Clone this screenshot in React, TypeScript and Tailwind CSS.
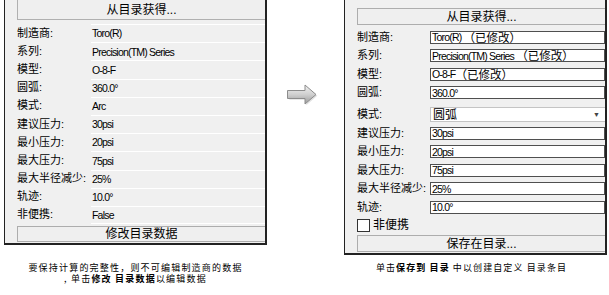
import React from "react";

const CJK = { fontFamily: '"Liberation Sans", "Noto Sans CJK SC", sans-serif' };

const leftRows: [string, string][] = [
  ["制造商:", "Toro(R)"],
  ["系列:", "Precision(TM) Series"],
  ["模型:", "O-8-F"],
  ["圆弧:", "360.0°"],
  ["模式:", "Arc"],
  ["建议压力:", "30psi"],
  ["最小压力:", "20psi"],
  ["最大压力:", "75psi"],
  ["最大半径减少:", "25%"],
  ["轨迹:", "10.0°"],
  ["非便携:", "False"],
];

function Val({ text, mod }: { text: string; mod?: string }) {
  return (
    <div className="flex items-center whitespace-pre text-black">
      <span className="text-[10.5px] leading-none tracking-[-0.8px]" style={{ fontFamily: '"Liberation Sans", Arial, sans-serif' }}>
        {text}
      </span>
      {mod && (
        <span className="text-[11.5px] leading-none tracking-normal" style={{ fontFamily: '"Noto Sans CJK SC", sans-serif' }}>
          {mod}
        </span>
      )}
    </div>
  );
}

function Label({ text, w }: { text: string; w: string }) {
  return (
    <div className={`${w} shrink-0 text-[11px] leading-none text-black whitespace-nowrap`} style={CJK}>
      {text}
    </div>
  );
}

function InputRow({ label, text, mod }: { label: string; text: string; mod?: string }) {
  return (
    <div className="flex h-[18.5px] items-center">
      <Label text={label} w="w-[73px]" />
      <div className="flex h-[13px] min-w-0 flex-1 items-center border border-[#4f4f4f] bg-white pl-[1px]">
        <Val text={text} mod={mod} />
      </div>
    </div>
  );
}

function Arrow() {
  return (
    <svg width="31" height="22" viewBox="0 0 31 22">
      <defs>
        <linearGradient id="ag" x1="0" y1="0" x2="0" y2="1">
          <stop offset="0" stopColor="#f2f2f2" />
          <stop offset="0.5" stopColor="#cfcfcf" />
          <stop offset="1" stopColor="#9a9a9a" />
        </linearGradient>
      </defs>
      <path d="M1.5,7 H18.5 V1.5 L29.5,11 L18.5,20.5 V15 H1.5 Z" fill="#000" opacity="0.12" transform="translate(0.8,0.8)" />
      <path d="M0.5,6.5 H18 V1 L29,10.5 L18,20 V14.5 H0.5 Z" fill="url(#ag)" stroke="#8c8c8c" strokeWidth="1" strokeLinejoin="round" />
    </svg>
  );
}

export default function App() {
  return (
    <div className="flex h-[295px] w-[609px] bg-white text-black">
      {/* Left column */}
      <div className="ml-[4px] flex w-[263px] shrink-0 flex-col">
        <div className="flex h-[245px] flex-col border-b-2 border-l border-r-2 border-[#222] bg-[#f0f0f0] pl-[12px]">
          <div className="flex h-[20px] items-center justify-center border-b border-l border-[#b0b0b0] bg-[#efefef] text-[12px] leading-none" style={CJK}>
            从目录获得...
          </div>
          <div className="mt-[4px] flex flex-col">
            {leftRows.map(([l, v], i) => (
              <div key={i} className="flex h-[18.2px] items-center">
                <Label text={l} w="w-[74px]" />
                <div className={`flex h-full flex-1 items-center border-t border-white pl-[1px] ${i === leftRows.length - 1 ? "border-b" : ""}`}>
                  <Val text={v} />
                </div>
              </div>
            ))}
          </div>
          <div className="mt-[2px] flex h-[16px] items-center justify-center border border-r-0 border-[#adadad] bg-[#efefef] text-[12px] leading-none" style={CJK}>
            修改目录数据
          </div>
        </div>
        <div className="mt-[17px] text-center text-[9px] leading-[11px] tracking-[1.2px] text-black" style={{ fontFamily: '"Noto Sans CJK SC", sans-serif' }}>
          <div>要保持计算的完整性，则不可编辑制造商的数据</div>
          <div>
            , 单击<span className="font-bold">修改 目录数据</span>以编辑数据
          </div>
        </div>
      </div>

      {/* Arrow */}
      <div className="ml-[20px] mt-[84px] w-[57px] shrink-0">
        <Arrow />
      </div>

      {/* Right column */}
      <div className="flex w-[263px] shrink-0 flex-col">
        <div className="flex h-[255px] flex-col border-b-2 border-l border-r-2 border-[#222] bg-[#f0f0f0] pl-[12px] pt-[8px]">
          <div className="flex h-[17px] items-center justify-center border border-r-0 border-[#adadad] bg-[#efefef] text-[12px] leading-none" style={CJK}>
            从目录获得...
          </div>
          <div className="mt-[3px] flex flex-col">
            <InputRow label="制造商:" text="Toro(R) " mod="（已修改）" />
            <InputRow label="系列:" text="Precision(TM) Series " mod="（已修改）" />
            <InputRow label="模型:" text="O-8-F" mod="（已修改）" />
            <InputRow label="圆弧:" text="360.0°" />
            <div className="flex h-[22px] items-center pt-[3px]">
              <Label text="模式:" w="w-[73px]" />
              <div className="flex h-[15px] flex-1 items-center justify-between border border-r-0 border-[#c4c4c4] bg-white pl-[2px] pr-[5px]">
                <span className="text-[12px] leading-none" style={CJK}>圆弧</span>
                <span className="text-[7px] leading-none text-[#444]">▼</span>
              </div>
            </div>
            <InputRow label="建议压力:" text="30psi" />
            <InputRow label="最小压力:" text="20psi" />
            <InputRow label="最大压力:" text="75psi" />
            <InputRow label="最大半径减少:" text="25%" />
            <InputRow label="轨迹:" text="10.0°" />
            <div className="flex h-[17.5px] items-center">
              <div className="h-[13px] w-[13px] border border-[#333] bg-white" />
              <span className="ml-[3px] text-[12px] leading-none" style={CJK}>非便携</span>
            </div>
          </div>
          <div className="mt-[1px] flex h-[17px] items-center justify-center border border-r-0 border-[#adadad] bg-[#efefef] text-[12px] leading-none" style={CJK}>
            保存在目录...
          </div>
        </div>
        <div className="mt-[7px] pr-[8px] text-center text-[9px] leading-[11px] tracking-[1.1px] text-black" style={{ fontFamily: '"Noto Sans CJK SC", sans-serif' }}>
          单击<span className="font-bold">保存到 目录</span> 中以创建自定义 目录条目
        </div>
      </div>
    </div>
  );
}
